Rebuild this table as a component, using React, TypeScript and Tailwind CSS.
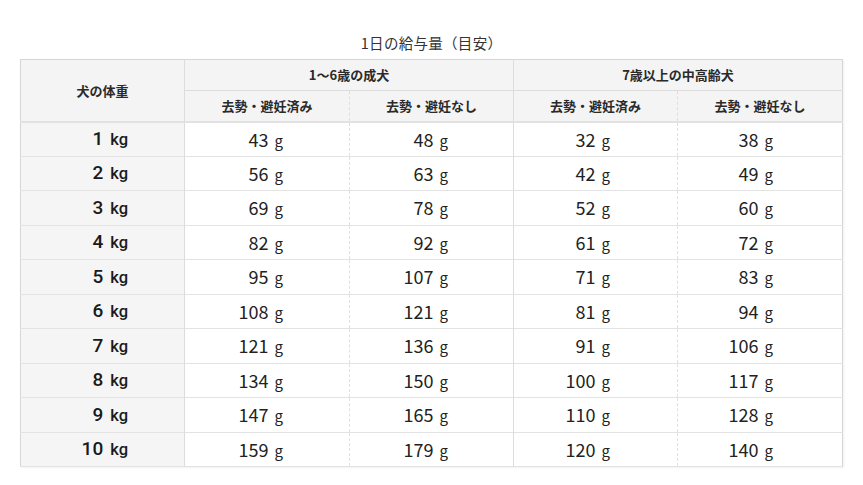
import React from 'react';

const rows: [number, number, number, number, number][] = [
  [1, 43, 48, 32, 38],
  [2, 56, 63, 42, 49],
  [3, 69, 78, 52, 60],
  [4, 82, 92, 61, 72],
  [5, 95, 107, 71, 83],
  [6, 108, 121, 81, 94],
  [7, 121, 136, 91, 106],
  [8, 134, 150, 100, 117],
  [9, 147, 165, 110, 128],
  [10, 159, 179, 120, 140],
];

const jp = "font-['Noto_Sans_CJK_JP','Noto_Sans',sans-serif]";

function Grams({ value }: { value: number }) {
  return (
    <span>
      <span className="text-[18px]">{value}</span>
      <span className="ml-[6px] text-[15px]">g</span>
    </span>
  );
}

export default function App() {
  return (
    <div className={`w-[863px] h-[485px] bg-white text-[#333] ${jp}`}>
      <div className="pt-[33px] text-center text-[14.5px] leading-[20px] tracking-[0.02em]">1日の給与量（目安）</div>
      <table className="mt-[6px] ml-[20px] w-[822px] table-fixed border-collapse border border-[#d6d6d6] shadow-[1px_1px_2px_rgba(0,0,0,0.06)]">
        <colgroup>
          <col className="w-[164px]" />
          <col className="w-[165px]" />
          <col className="w-[164px]" />
          <col className="w-[164px]" />
          <col className="w-[165px]" />
        </colgroup>
        <thead className="bg-[#f4f4f4] text-[13px] font-bold text-[#2a2a2a]">
          <tr className="h-[31px]">
            <th rowSpan={2} className="border-r border-[#dcdcdc] border-b-2 border-b-[#e2e2e2] font-bold">
              犬の体重
            </th>
            <th colSpan={2} className="border-r border-b border-[#dcdcdc] font-bold">
              1〜6歳の成犬
            </th>
            <th colSpan={2} className="border-b border-[#dcdcdc] font-bold">
              7歳以上の中高齢犬
            </th>
          </tr>
          <tr className="h-[31px] border-b-2 border-[#e2e2e2]">
            <th className="border-r border-dashed border-r-[#dedede] font-bold">去勢・避妊済み</th>
            <th className="border-r border-[#dcdcdc] font-bold">去勢・避妊なし</th>
            <th className="border-r border-dashed border-r-[#dedede] font-bold">去勢・避妊済み</th>
            <th className="font-bold">去勢・避妊なし</th>
          </tr>
        </thead>
        <tbody className="text-[#222]">
          {rows.map(([kg, a, b, c, d]) => (
            <tr key={kg} className="h-[34.5px] border-b border-[#e3e3e3]">
              <td className="bg-[#f5f5f5] border-r border-[#dcdcdc] pr-[56px] text-right font-['Roboto','Liberation_Sans',sans-serif] font-medium text-[#1a1a1a]">
                <span className="text-[19px]">{kg}</span>
                <span className="ml-[7px] text-[16.5px]">kg</span>
              </td>
              <td className="border-r border-dashed border-r-[#e0e0e0] pr-[66px] text-right">
                <Grams value={a} />
              </td>
              <td className="border-r border-[#dcdcdc] pr-[65px] text-right">
                <Grams value={b} />
              </td>
              <td className="border-r border-dashed border-r-[#e0e0e0] pr-[67px] text-right">
                <Grams value={c} />
              </td>
              <td className="pr-[69px] text-right">
                <Grams value={d} />
              </td>
            </tr>
          ))}
        </tbody>
      </table>
    </div>
  );
}
